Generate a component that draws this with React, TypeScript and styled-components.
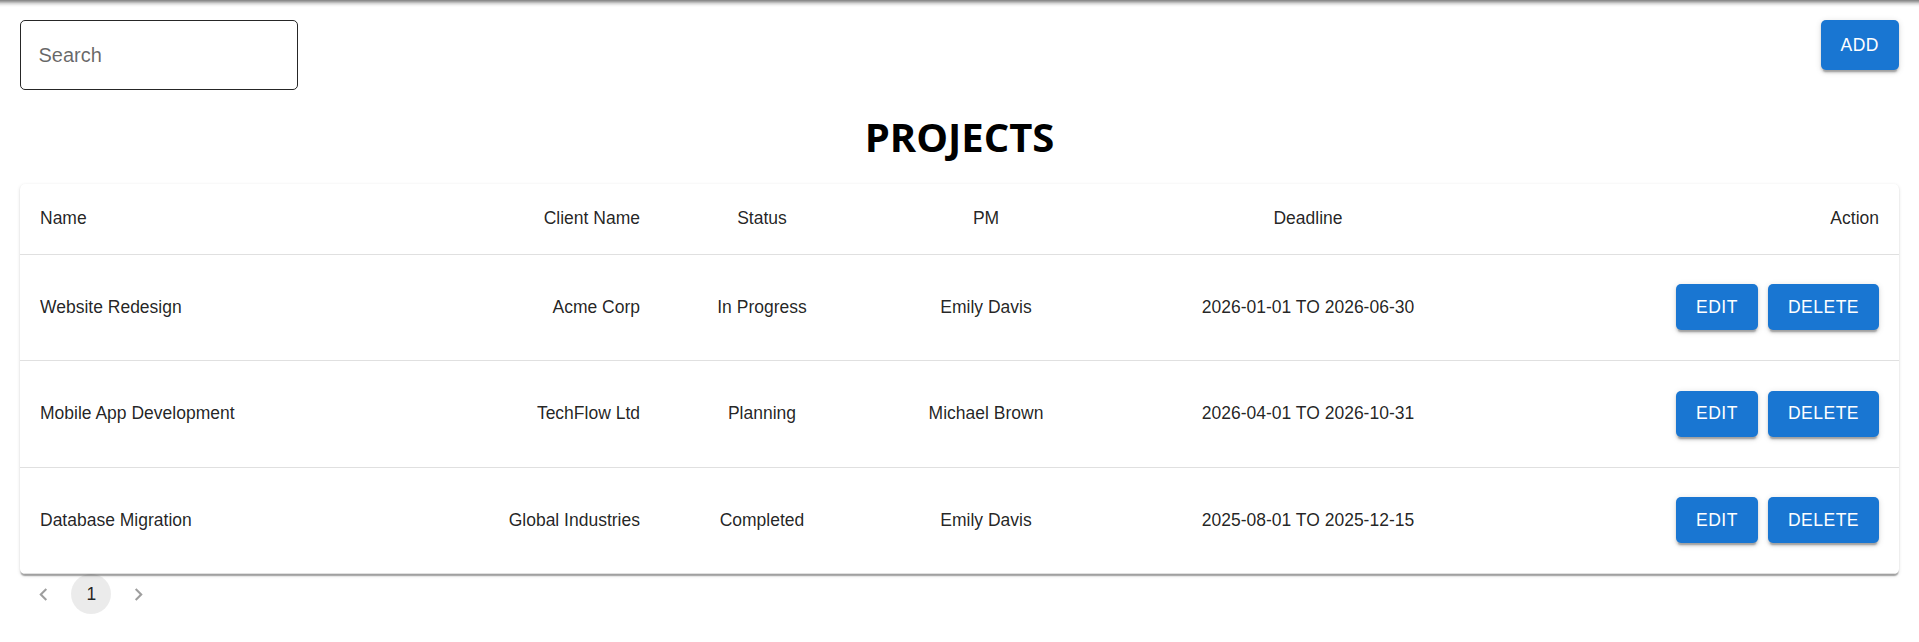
import React from "react";
import styled, { createGlobalStyle } from "styled-components";

const GlobalStyle = createGlobalStyle`
  html, body {
    margin: 0;
    padding: 0;
    background: #ffffff;
  }
  body {
    font-family: "Liberation Sans", Arial, Helvetica, sans-serif;
    color: rgba(0, 0, 0, 0.87);
  }
  * { box-sizing: border-box; }
`;

const TopShade = styled.div`
  position: fixed;
  top: 0;
  left: 0;
  right: 0;
  height: 7px;
  pointer-events: none;
  background: linear-gradient(
    to bottom,
    rgba(0, 0, 0, 0.5) 0%,
    rgba(0, 0, 0, 0.34) 25%,
    rgba(0, 0, 0, 0.16) 50%,
    rgba(0, 0, 0, 0.05) 75%,
    rgba(0, 0, 0, 0) 100%
  );
`;

const Page = styled.main`
  padding: 20px 20px 0;
`;

const Toolbar = styled.div`
  display: flex;
  justify-content: space-between;
  align-items: flex-start;
`;

const SearchBox = styled.div`
  width: 278px;
  height: 70px;
  border: 1.25px solid rgba(0, 0, 0, 0.85);
  border-radius: 5px;
  display: flex;
  align-items: center;
`;

const SearchInput = styled.input`
  border: none;
  outline: none;
  background: transparent;
  width: 100%;
  height: 100%;
  padding: 0 17.5px;
  font-family: "Liberation Sans", Arial, Helvetica, sans-serif;
  font-size: 20px;
  color: rgba(0, 0, 0, 0.87);
  &::placeholder {
    color: rgba(0, 0, 0, 0.6);
    opacity: 1;
  }
`;

const ActionButton = styled.button<{ $tall?: boolean }>`
  display: inline-flex;
  align-items: center;
  justify-content: center;
  height: ${(p) => (p.$tall ? "50px" : "46px")};
  padding: 0 20px;
  border: none;
  border-radius: 5px;
  background: #1976d2;
  color: #ffffff;
  font-family: "Liberation Sans", Arial, Helvetica, sans-serif;
  font-size: 17.5px;
  font-weight: 500;
  letter-spacing: 0.5px;
  text-transform: uppercase;
  cursor: pointer;
  box-shadow: 0px 3.75px 1.25px -2.5px rgba(0, 0, 0, 0.2),
    0px 2.5px 2.5px 0px rgba(0, 0, 0, 0.14),
    0px 1.25px 6.25px 0px rgba(0, 0, 0, 0.12);
`;

const Title = styled.h1`
  margin: 23px 0 23px;
  text-align: center;
  font-family: "Open Sans", "Noto Sans", sans-serif;
  font-weight: 700;
  font-size: 40px;
  line-height: 48px;
  color: #000000;
`;

const Card = styled.section`
  background: #ffffff;
  border-radius: 5px;
  box-shadow: 0px 2.5px 1.25px -1.25px rgba(0, 0, 0, 0.2),
    0px 1.25px 1.25px 0px rgba(0, 0, 0, 0.14),
    0px 1.25px 3.75px 0px rgba(0, 0, 0, 0.12);
  overflow: hidden;
`;

const Row = styled.div<{ $head?: boolean }>`
  display: grid;
  grid-template-columns: 380px 260px 204px 244px 400px 1fr;
  height: ${(p) => (p.$head ? "70.5px" : "106.5px")};
  border-bottom: 1px solid #e0e0e0;
`;

const Cell = styled.div<{ $align?: "left" | "right" | "center" }>`
  display: flex;
  align-items: center;
  justify-content: ${(p) =>
    p.$align === "right" ? "flex-end" : p.$align === "center" ? "center" : "flex-start"};
  padding: 0 20px;
  font-size: 17.5px;
  line-height: 1.43;
  color: rgba(0, 0, 0, 0.87);
  white-space: nowrap;
`;

const ActionCell = styled(Cell)`
  gap: 10px;
`;

const Pager = styled.nav`
  display: flex;
  align-items: center;
`;

const PageItem = styled.button<{ $selected?: boolean; $disabled?: boolean }>`
  width: 40px;
  height: 40px;
  margin: 0 3.75px;
  padding: 0;
  border: none;
  border-radius: 50%;
  display: flex;
  align-items: center;
  justify-content: center;
  background: ${(p) => (p.$selected ? "rgba(0, 0, 0, 0.08)" : "transparent")};
  color: ${(p) => (p.$disabled ? "rgba(0, 0, 0, 0.38)" : "rgba(0, 0, 0, 0.87)")};
  font-family: "Liberation Sans", Arial, Helvetica, sans-serif;
  font-size: 17.5px;
  cursor: ${(p) => (p.$disabled ? "default" : "pointer")};
`;

const projects = [
  {
    name: "Website Redesign",
    client: "Acme Corp",
    status: "In Progress",
    pm: "Emily Davis",
    deadline: "2026-01-01 TO 2026-06-30",
  },
  {
    name: "Mobile App Development",
    client: "TechFlow Ltd",
    status: "Planning",
    pm: "Michael Brown",
    deadline: "2026-04-01 TO 2026-10-31",
  },
  {
    name: "Database Migration",
    client: "Global Industries",
    status: "Completed",
    pm: "Emily Davis",
    deadline: "2025-08-01 TO 2025-12-15",
  },
];

const ChevronLeft = () => (
  <svg width="25" height="25" viewBox="0 0 24 24" fill="currentColor">
    <path d="M15.41 7.41 14 6l-6 6 6 6 1.41-1.41L10.83 12z" />
  </svg>
);

const ChevronRight = () => (
  <svg width="25" height="25" viewBox="0 0 24 24" fill="currentColor">
    <path d="M10 6 8.59 7.41 13.17 12l-4.58 4.59L10 18l6-6z" />
  </svg>
);

export default function App() {
  return (
    <>
      <GlobalStyle />
      <TopShade />
      <Page>
        <Toolbar>
          <SearchBox>
            <SearchInput placeholder="Search" />
          </SearchBox>
          <ActionButton $tall>Add</ActionButton>
        </Toolbar>
        <Title>PROJECTS</Title>
        <Card>
          <Row $head>
            <Cell>Name</Cell>
            <Cell $align="right">Client Name</Cell>
            <Cell $align="center">Status</Cell>
            <Cell $align="center">PM</Cell>
            <Cell $align="center">Deadline</Cell>
            <Cell $align="right">Action</Cell>
          </Row>
          {projects.map((p) => (
            <Row key={p.name}>
              <Cell>{p.name}</Cell>
              <Cell $align="right">{p.client}</Cell>
              <Cell $align="center">{p.status}</Cell>
              <Cell $align="center">{p.pm}</Cell>
              <Cell $align="center">{p.deadline}</Cell>
              <ActionCell $align="right">
                <ActionButton>Edit</ActionButton>
                <ActionButton>Delete</ActionButton>
              </ActionCell>
            </Row>
          ))}
        </Card>
        <Pager>
          <PageItem $disabled aria-label="previous page">
            <ChevronLeft />
          </PageItem>
          <PageItem $selected>1</PageItem>
          <PageItem $disabled aria-label="next page">
            <ChevronRight />
          </PageItem>
        </Pager>
      </Page>
    </>
  );
}
